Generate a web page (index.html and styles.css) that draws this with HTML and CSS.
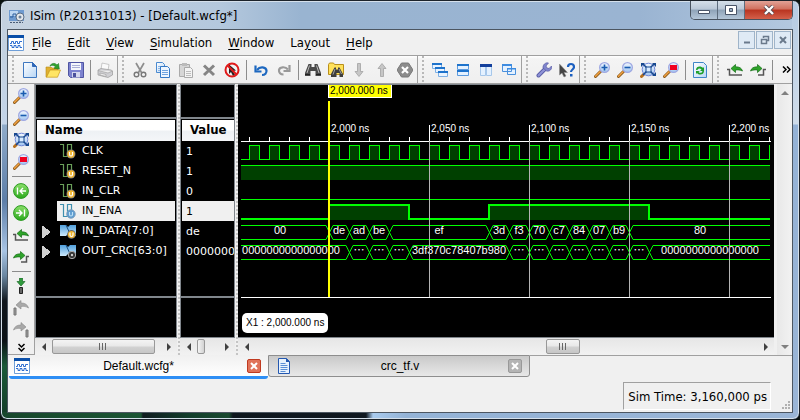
FILE: index.html
```html
<!DOCTYPE html>
<html lang="en">
<head>
  <meta charset="UTF-8">
  <title>ISim (P.20131013) - [Default.wcfg*]</title>
  <link rel="stylesheet" href="styles.css">
</head>
<body>

  <!-- icon set -->
  <svg class="defs" aria-hidden="true">
    <linearGradient id="glass" x1="0" y1="0" x2="0" y2="1">
      <stop offset="0" stop-color="#f4f9ff"/><stop offset="1" stop-color="#9ec4f0"/>
    </linearGradient>
    <linearGradient id="page" x1="0" y1="0" x2="1" y2="1">
      <stop offset="0" stop-color="#fff"/><stop offset="1" stop-color="#b8d6f5"/>
    </linearGradient>
    <linearGradient id="ball" x1="0" y1="0" x2="0" y2="1">
      <stop offset="0" stop-color="#8be06a"/><stop offset="1" stop-color="#2aa81c"/>
    </linearGradient>
    <linearGradient id="busfill" x1="0" y1="0" x2="0" y2="1">
      <stop offset="0" stop-color="#4f9fdc"/><stop offset="1" stop-color="#cfeafc"/>
    </linearGradient>
    <symbol id="app" viewBox="0 0 16 16">
      <path d="M0 2h15v11H0z" fill="#6f9bd0"/><path d="M1 3h8v5H1z" fill="#bcd6f2"/>
      <path d="M1 9h3V6h3v3h2" stroke="#2d5f9e" fill="none"/>
      <circle cx="11" cy="9" r="4" fill="#e4e8ec" stroke="#5c6f86"/><circle cx="11" cy="9" r="1.5" fill="#68809c"/>
      <path d="M1 14.5h13" stroke="#4a5d77" stroke-dasharray="2 1"/>
    </symbol>
    <symbol id="wave" viewBox="0 0 16 16">
      <path d="M.5.5h15v15H.5z" fill="#fff" stroke="#6f9fd8"/><path d="M0 0h16v3H0z" fill="#0b4fa8"/>
      <path d="M2 8.500h1.500v-2h2v2h2v-2h2v2h2v-2H14M2 10.500h2v2h2v-2h2v2h2v-2h2v2h2" fill="none" stroke="#2f6fd0"/>
    </symbol>
    <symbol id="doc" viewBox="0 0 16 16">
      <path d="M2.500.5h8l3 3v12h-11z" fill="#e8f2fd" stroke="#2458b0"/><path d="M10 0v4h4z" fill="#2458b0"/>
      <path d="M4.500 5.500h5m-5 2h7m-7 2h7m-7 2h7m-7 2h5" stroke="#5b8fd6"/>
    </symbol>
    <symbol id="new" viewBox="0 0 16 16">
      <path d="M1.500.5h9l4 4v11h-13z" fill="url(#page)" stroke="#3f78c0"/><path d="M10.500.5v4h4z" fill="#2f68b8" stroke="#2f68b8"/>
    </symbol>
    <symbol id="open" viewBox="0 0 16 16">
      <path d="M1 5h5l1 1h6v2H5l-3 7H1z" fill="#e0b030" stroke="#b58a18" stroke-width=".6"/>
      <path d="M5 8h10.500l-3 7.200H1.500z" fill="#ffe565" stroke="#c99a1c" stroke-width=".7"/>
      <path d="M5 4c1-3 5-3.500 7-1l1.500-1.500.8 5.500-5.300-.8L10.500 5C9 3 7 3 5 4z" fill="#2fa02c" stroke="#14781a" stroke-width=".6"/>
    </symbol>
    <symbol id="save" viewBox="0 0 16 16">
      <path d="M.5.5h15v15h-13l-2-2z" fill="#7d83cf" stroke="#4f55a2"/><path d="M3 1h10v7H3z" fill="#f4f6fb"/>
      <path d="M4 3.500h8M4 5.500h8" stroke="#a9aed6"/><path d="M4 10h8v5.500H4z" fill="#d4d7ee"/><path d="M5 11h3v4H5z" fill="#4b519c"/>
    </symbol>
    <symbol id="print" viewBox="0 0 16 16">
      <path d="M5 1l7 1.500-1 6-7-1z" fill="#fafafa" stroke="#b5b5b5" stroke-width=".7"/>
      <path d="M1 8l3-1.500 10 1.500 1.500 1v4L11 15.500 1 13z" fill="#cfcfd3" stroke="#999" stroke-width=".7"/>
      <path d="M1 8.500l10 2.500 4.500-2M3 11l6 1.500v2L3 13z" fill="#eee" stroke="#999" stroke-width=".6"/>
    </symbol>
    <symbol id="cut" viewBox="0 0 16 16">
      <path d="M4 1l5.500 9.500M12 1L6.500 10.500" stroke="#8e8e8e" stroke-width="1.700"/>
      <circle cx="4.500" cy="12.500" r="2.300" fill="none" stroke="#777" stroke-width="1.400"/><circle cx="11.500" cy="12.500" r="2.300" fill="none" stroke="#777" stroke-width="1.400"/>
    </symbol>
    <symbol id="copy" viewBox="0 0 16 16">
      <path d="M1.500.5h6l2 2v8h-8z" fill="url(#page)" stroke="#4a8ad0"/><path d="M3 4.500h5m-5 2h5m-5 2h5" stroke="#8db6e6"/>
      <path d="M5.500 4.500h7l2 2v9h-9z" fill="#eef6ff" stroke="#3579c6"/><path d="M7 8.500h6m-6 2h6m-6 2h6" stroke="#6fa3df"/>
    </symbol>
    <symbol id="paste" viewBox="0 0 16 16">
      <path d="M1.500 2.500h10v12h-10z" fill="#d6d6d6" stroke="#aaa"/><path d="M4 1h5v3H4z" fill="#bbb"/>
      <path d="M6.500 5.500h6l2 2v8h-8z" fill="#f4f4f4" stroke="#aaa"/><path d="M8 9.500h5m-5 2h5m-5 2h5" stroke="#bdbdbd"/>
    </symbol>
    <symbol id="del" viewBox="0 0 16 16"><path d="M3 3.500l10 9.500M13 3.500L3 13" stroke="#858585" stroke-width="3"/></symbol>
    <symbol id="nosel" viewBox="0 0 16 16">
      <path d="M5 2.500l7 6-3 .5 2 4-2 1-2-4-2 2z" fill="#222"/>
      <circle cx="8" cy="8" r="6.500" fill="none" stroke="#e01a1a" stroke-width="2"/><path d="M3.500 3.500l9 9" stroke="#e01a1a" stroke-width="2"/>
    </symbol>
    <symbol id="undo" viewBox="0 0 16 16">
      <path d="M2.500 3.500v6h6" fill="none" stroke="#1d68c0" stroke-width="2.200"/>
      <path d="M4 8c3-4 9-3 9.500.5.3 2.500-1.500 4.500-4.500 4.500" fill="none" stroke="#1d68c0" stroke-width="2.200"/>
    </symbol>
    <symbol id="redo" viewBox="0 0 16 16">
      <path d="M13.500 3v6h-6" fill="none" stroke="#999" stroke-width="2.200"/>
      <path d="M12 7.500c-3-3.500-8.500-2.500-9 .5-.3 2.500 1.500 4.500 4.500 4.500" fill="none" stroke="#999" stroke-width="2.200"/>
    </symbol>
    <symbol id="find" viewBox="0 0 16 16">
      <path d="M3.500 2h3v3h3V2h3l3.500 9v3h-5.500V9h-5v5H0v-3z" fill="#4a4a4a"/>
      <path d="M4.500 3.500L2 11m9.500-7.500L14 11" stroke="#b9b9b9"/><path d="M0 12.500h5m6 0h5" stroke="#222"/>
    </symbol>
    <symbol id="findf" viewBox="0 0 16 16">
      <path d="M.5 2.500l1-1.500h4l1 1.500h9v10H.5z" fill="#ffe15a" stroke="#b98f1b"/>
      <path d="M6.500 5.500h1.500v2h2v-2h1.500L15 12v3h-3.500v-4h-3v4H3v-3z" fill="#3e3e3e"/><path d="M7 7l-2 5.500m6-5.500l2.500 5" stroke="#bbb" stroke-width=".8"/>
    </symbol>
    <symbol id="down" viewBox="0 0 16 16"><path d="M6.500 1.500h3v8H12l-4 5-4-5h2.500z" fill="#c6c6c6" stroke="#a2a2a2" stroke-width=".8"/></symbol>
    <symbol id="up" viewBox="0 0 16 16"><path d="M6.500 14.500h3v-8H12l-4-5-4 5h2.500z" fill="#c6c6c6" stroke="#a2a2a2" stroke-width=".8"/></symbol>
    <symbol id="stop" viewBox="0 0 16 16">
      <path d="M4.500 1h7L16 8l-4.500 7h-7L0 8z" fill="#8c8c8c" stroke="#787878"/><path d="M5 5l6 6m0-6l-6 6" stroke="#fff" stroke-width="2.200"/>
    </symbol>
    <symbol id="cascade" viewBox="0 0 16 16">
      <path d="M.5 1.500h9v5h-9zM3.500 5.500h9v5h-9zM6.500 9.500h9v5h-9z" fill="#eaf4ff" stroke="#7fb0e4"/>
      <path d="M0 1h10v2H0zM3 5h10v2H3zM6 9h10v2H6z" fill="#1e73cc"/>
    </symbol>
    <symbol id="tileh" viewBox="0 0 16 16">
      <path d="M2.500 2.500h11v5h-11zM2.500 8.500h11v5h-11z" fill="#e4f1ff" stroke="#5b9ade"/><path d="M2 2h12v2H2zM2 8h12v2H2z" fill="#1e73cc"/>
    </symbol>
    <symbol id="tilev" viewBox="0 0 16 16">
      <path d="M2.500 2.500h5v11h-5zM8.500 2.500h5v11h-5z" fill="#e4f1ff" stroke="#a6c7ea"/><path d="M2 2h12v3H2z" fill="#123f9c"/>
    </symbol>
    <symbol id="restore" viewBox="0 0 16 16">
      <path d="M1.500 2.500h9v7h-9zM6.500 6.500h8v6h-8z" fill="#e4f1ff" stroke="#4a90dc"/><path d="M1 2h10v2H1zM6 6h9v1.500H6z" fill="#3d8be0"/>
    </symbol>
    <symbol id="wrench" viewBox="0 0 16 16">
      <path d="M2.500 13.500l6-6" stroke="#5b5fa8" stroke-width="4" stroke-linecap="round"/>
      <path d="M2.500 13.500l6-6" stroke="#8f94d8" stroke-width="2" stroke-linecap="round"/>
      <path d="M12.500 1L10 4l1 2 2 .5L15.500 4c1 3-2 6-5 5L7 6c-.5-3 2.500-6 5.500-5z" fill="#8085cc" stroke="#5054a0" stroke-width=".6"/>
    </symbol>
    <symbol id="help" viewBox="0 0 16 16">
      <path d="M.5 2v11l2.500-2 2 4 2-1-2-3.500h3.500z" fill="#444" stroke="#888" stroke-width=".5"/>
      <path d="M9 5c0-4 6-4 6 0 0 2.500-3 2.500-3 5" fill="none" stroke="#1b5fc0" stroke-width="2.200"/><path d="M11 12h2.500v2.500H11z" fill="#1b5fc0"/>
    </symbol>
    <symbol id="lens" viewBox="0 0 16 16">
      <path d="M1.500 14.500L6.500 9.500" stroke="#8c5a1a" stroke-width="3" stroke-linecap="round"/><path d="M1.500 14.200L6 9.700" stroke="#f0a040" stroke-width="1.500" stroke-linecap="round"/>
      <circle cx="10.500" cy="5.500" r="4.900" fill="url(#glass)" stroke="#9fa8e2" stroke-width="1.200"/>
    </symbol>
    <symbol id="zin" viewBox="0 0 16 16"><use href="#lens"/><path d="M7.500 5.500h6m-3-3v6" stroke="#1a5cb0" stroke-width="1.600"/></symbol>
    <symbol id="zout" viewBox="0 0 16 16"><use href="#lens"/><path d="M7.500 5.500h6" stroke="#1a5cb0" stroke-width="1.600"/></symbol>
    <symbol id="zfit" viewBox="0 0 16 16">
      <path d="M1.500 14.500l3-3" stroke="#b8701c" stroke-width="3" stroke-linecap="round"/>
      <circle cx="8.500" cy="7.500" r="6.300" fill="url(#glass)" stroke="#6f86d8"/>
      <path d="M3 2l11 11M14 2L3 13" stroke="#17488f" stroke-width="1.500"/><path d="M6 5h5v5H6z" fill="#d9ebff" stroke="#17488f"/>
      <path d="M1 1h4L1 5zM16 1h-4l4 4zM16 14h-4l4-4z" fill="#17488f"/>
    </symbol>
    <symbol id="zred" viewBox="0 0 16 16"><use href="#lens"/><path d="M7 3h7v5H7z" fill="#f00020"/></symbol>
    <symbol id="reload" viewBox="0 0 16 16">
      <path d="M1.500.5h10l3 3v12h-13z" fill="url(#page)" stroke="#3f86c8"/>
      <path d="M4 8c0-4 5-4.500 7-2l1-1v4H8l1.500-1.500C8 6 6 6.500 5.500 8zM12 9c0 4-5 4.500-7 2l-1 1V9h4l-1.500 1C8 11.500 10 11 10.500 9z" fill="#1fa02a"/>
    </symbol>
    <symbol id="prev" viewBox="0 0 16 16">
      <path d="M0 7.500h2.500v5.500H15" fill="none" stroke="#555" stroke-width="1.500"/>
      <path d="M4 6.500L8.500 2.500v2.300c4 0 6 1.200 7 4.200C13 7.800 11 7.800 8.500 8V10.500z" fill="#2ea42a" stroke="#146b16" stroke-width=".7"/>
    </symbol>
    <symbol id="next" viewBox="0 0 16 16">
      <path d="M16 7.500h-2.500v5.500H8" fill="none" stroke="#555" stroke-width="1.500"/>
      <path d="M12 6.500L7.500 2.500v2.300c-4 0-6 1.200-7 4.200C3 7.800 5 7.800 7.500 8V10.500z" fill="#2ea42a" stroke="#146b16" stroke-width=".7"/>
    </symbol>
    <symbol id="gostart" viewBox="0 0 16 16">
      <circle cx="8" cy="8" r="7.400" fill="url(#ball)" stroke="#2c9a22"/><path d="M4.500 4.500v7M13 8H7m3-3L7 8l3 3" fill="none" stroke="#fff" stroke-width="1.400"/>
    </symbol>
    <symbol id="goend" viewBox="0 0 16 16">
      <circle cx="8" cy="8" r="7.400" fill="url(#ball)" stroke="#2c9a22"/><path d="M11.500 4.500v7M3 8h6M6 5l3 3-3 3" fill="none" stroke="#fff" stroke-width="1.400"/>
    </symbol>
    <symbol id="marker" viewBox="0 0 16 16">
      <path d="M6.500 0h3v3.500H12L8 8 4 3.500h2.500z" fill="#2f9a3c" stroke="#1b6a26" stroke-width=".7"/><path d="M6.500 9.500h3v6h-3z" fill="#666" stroke="#222"/>
    </symbol>
    <symbol id="mprev" viewBox="0 0 16 16">
      <path d="M3 5l5-4.500V3c4 0 6.500 1.500 7.500 5C13 6.300 11 6.200 8 6.500V9z" fill="#a8a8a8" stroke="#888" stroke-width=".6"/><path d="M1 8h2v7H1z" fill="#999" stroke="#777"/>
    </symbol>
    <symbol id="mnext" viewBox="0 0 16 16">
      <path d="M13 5L8 .5V3C4 3 1.500 4.500.5 8 3 6.300 5 6.200 8 6.500V9z" fill="#a8a8a8" stroke="#888" stroke-width=".6"/><path d="M13 8h2v7h-2z" fill="#999" stroke="#777"/>
    </symbol>
    <symbol id="sig" viewBox="0 0 16 16">
      <path d="M0 1.500h3.500v12h4v-12h4V8" fill="none" stroke="#6aa05a" stroke-width="1.200"/>
      <circle cx="11" cy="11" r="4.500" fill="#777"/><circle cx="11" cy="11" r="3.700" fill="#f0b42c"/><path d="M9.500 9v2.500c0 2 3 2 3 0V9" fill="none" stroke="#fff" stroke-width="1.200"/>
    </symbol>
    <symbol id="sigsel" viewBox="0 0 16 16">
      <path d="M0 1.500h3.500v12h4v-12h4V8" fill="none" stroke="#3f8fae" stroke-width="1.200"/>
      <circle cx="11" cy="11" r="4.200" fill="#5b9bd0" stroke="#7d9dbb"/><path d="M9.500 9v2.500c0 2 3 2 3 0V9" fill="none" stroke="#bfe0f5" stroke-width="1.200"/>
    </symbol>
    <symbol id="bus" viewBox="0 0 16 16">
      <path d="M0 2h6l2 2 2-2h6v11h-6l-2-2-2 2H0z" fill="url(#busfill)"/><path d="M6 2l5 11" stroke="#1c4f80"/>
      <circle cx="11.500" cy="11.500" r="4.400" fill="#666"/><circle cx="11.500" cy="11.500" r="3.600" fill="#f0b42c"/><path d="M10 9.500V12c0 2 3 2 3 0V9.500" fill="none" stroke="#fff" stroke-width="1.200"/>
    </symbol>
    <symbol id="busout" viewBox="0 0 16 16">
      <path d="M0 2h6l2 2 2-2h6v11h-6l-2-2-2 2H0z" fill="url(#busfill)"/><path d="M6 2l5 11" stroke="#1c4f80"/>
      <circle cx="12" cy="12" r="3.700" fill="#333" stroke="#aaa"/><circle cx="12" cy="12" r="1.200" fill="#ccc"/>
    </symbol>
  </svg>

  <div class="window">
    <header class="titlebar">
      <svg class="icon"><use href="#app"/></svg>
      <span class="title">ISim (P.20131013) - [Default.wcfg*]</span>
      <div class="caption">
        <button aria-label="Minimize"><svg width="14" height="10"><path d="M1.500 5.500h11v3h-11z" fill="#fff" stroke="#4a5568"/></svg></button>
        <button aria-label="Maximize"><svg width="12" height="10"><path d="M.5.5h11v9H.5zM4.500 3.500h3v3h-3z" fill="#fff" fill-rule="evenodd" stroke="#4a5568"/></svg></button>
        <button class="close" aria-label="Close"><svg width="12" height="10"><path d="M2 1l8 8m0-8L2 9" stroke="#5b4a50" stroke-width="4"/><path d="M2 1l8 8m0-8L2 9" stroke="#fff" stroke-width="2.400"/></svg></button>
      </div>
    </header>

    <main class="client">
      <nav class="menubar">
        <svg class="icon"><use href="#wave"/></svg>
        <button><u>F</u>ile</button>
        <button><u>E</u>dit</button>
        <button><u>V</u>iew</button>
        <button><u>S</u>imulation</button>
        <button><u>W</u>indow</button>
        <button>La<u>y</u>out</button>
        <button><u>H</u>elp</button>
        <div class="mdi">
          <button aria-label="Minimize document"><svg width="10" height="10"><path d="M2 7.500h6" stroke="#6a7a8c" stroke-width="2"/></svg></button>
          <button aria-label="Restore document"><svg width="10" height="10"><path d="M3.500 3V1.500h5v4H7M1.500 4.500h5v4h-5z" fill="none" stroke="#6a7a8c" stroke-width="1.500"/></svg></button>
          <button aria-label="Close document"><svg width="10" height="10"><path d="M2 2l6 6m0-6L2 8" stroke="#6a7a8c" stroke-width="2"/></svg></button>
        </div>
      </nav>

      <div class="toolbar">
        <div class="group">
          <button aria-label="New"><svg class="icon"><use href="#new"/></svg></button>
          <button aria-label="Open"><svg class="icon"><use href="#open"/></svg></button>
          <button aria-label="Save"><svg class="icon"><use href="#save"/></svg></button>
          <i class="sep"></i>
          <button aria-label="Print"><svg class="icon"><use href="#print"/></svg></button>
        </div>
        <div class="group">
          <button aria-label="Cut"><svg class="icon"><use href="#cut"/></svg></button>
          <button aria-label="Copy"><svg class="icon"><use href="#copy"/></svg></button>
          <button aria-label="Paste"><svg class="icon"><use href="#paste"/></svg></button>
          <button aria-label="Delete"><svg class="icon"><use href="#del"/></svg></button>
          <button aria-label="Deselect"><svg class="icon"><use href="#nosel"/></svg></button>
          <i class="sep"></i>
          <button aria-label="Undo"><svg class="icon"><use href="#undo"/></svg></button>
          <button aria-label="Redo"><svg class="icon"><use href="#redo"/></svg></button>
          <i class="sep"></i>
          <button aria-label="Find"><svg class="icon"><use href="#find"/></svg></button>
          <button aria-label="Find in files"><svg class="icon"><use href="#findf"/></svg></button>
          <button aria-label="Next"><svg class="icon"><use href="#down"/></svg></button>
          <button aria-label="Previous"><svg class="icon"><use href="#up"/></svg></button>
          <button aria-label="Stop"><svg class="icon"><use href="#stop"/></svg></button>
        </div>
        <div class="group">
          <button aria-label="Cascade"><svg class="icon"><use href="#cascade"/></svg></button>
          <button aria-label="Tile horizontally"><svg class="icon"><use href="#tileh"/></svg></button>
          <button aria-label="Tile vertically"><svg class="icon"><use href="#tilev"/></svg></button>
          <button aria-label="Restore"><svg class="icon"><use href="#restore"/></svg></button>
        </div>
        <div class="group">
          <button aria-label="Settings"><svg class="icon"><use href="#wrench"/></svg></button>
          <button aria-label="What's this"><svg class="icon"><use href="#help"/></svg></button>
        </div>
        <div class="group">
          <button aria-label="Zoom in"><svg class="icon"><use href="#zin"/></svg></button>
          <button aria-label="Zoom out"><svg class="icon"><use href="#zout"/></svg></button>
          <button aria-label="Zoom to full view"><svg class="icon"><use href="#zfit"/></svg></button>
          <button aria-label="Zoom to cursor"><svg class="icon"><use href="#zred"/></svg></button>
          <i class="sep"></i>
          <button aria-label="Reload"><svg class="icon"><use href="#reload"/></svg></button>
        </div>
        <div class="group last">
          <button aria-label="Previous transition"><svg class="icon"><use href="#prev"/></svg></button>
          <button aria-label="Next transition"><svg class="icon"><use href="#next"/></svg></button>
          <i class="sep"></i>
          <button aria-label="More"><svg width="9" height="7"><path d="M1 .5l3 3-3 3m4-6l3 3-3 3" fill="none" stroke="#000" stroke-width="1.500"/></svg></button>
        </div>
      </div>

      <div class="workspace">
        <div class="sidebar">
          <button aria-label="Zoom in"><svg class="icon"><use href="#zin"/></svg></button>
          <button aria-label="Zoom out"><svg class="icon"><use href="#zout"/></svg></button>
          <button aria-label="Full view"><svg class="icon"><use href="#zfit"/></svg></button>
          <button aria-label="To cursor"><svg class="icon"><use href="#zred"/></svg></button>
          <i class="hsep"></i>
          <button aria-label="Go to start"><svg class="icon"><use href="#gostart"/></svg></button>
          <button aria-label="Go to end"><svg class="icon"><use href="#goend"/></svg></button>
          <button aria-label="Previous transition"><svg class="icon"><use href="#prev"/></svg></button>
          <button aria-label="Next transition"><svg class="icon"><use href="#next"/></svg></button>
          <i class="hsep"></i>
          <button aria-label="Add marker"><svg class="icon"><use href="#marker"/></svg></button>
          <button aria-label="Previous marker"><svg class="icon"><use href="#mprev"/></svg></button>
          <button aria-label="Next marker"><svg class="icon"><use href="#mnext"/></svg></button>
          <button class="more" aria-label="More"><svg width="7" height="9"><path d="M.5 1l3 3 3-3m-6 4l3 3 3-3" fill="none" stroke="#000" stroke-width="1.500"/></svg></button>
        </div>

        <div class="pane names">
          <div class="view">
            <div class="top"></div>
            <table>
              <thead><tr><th>Name</th></tr></thead>
              <tbody>
                <tr><td><span class="cell"><svg class="icon"><use href="#sig"/></svg><span>CLK</span></span></td></tr>
                <tr><td><span class="cell"><svg class="icon"><use href="#sig"/></svg><span>RESET_N</span></span></td></tr>
                <tr><td><span class="cell"><svg class="icon"><use href="#sig"/></svg><span>IN_CLR</span></span></td></tr>
                <tr class="selected"><td><span class="cell"><svg class="icon"><use href="#sigsel"/></svg><span>IN_ENA</span></span></td></tr>
                <tr class="branch"><td><span class="cell"><svg class="icon"><use href="#bus"/></svg><span>IN_DATA[7:0]</span></span></td></tr>
                <tr class="branch"><td><span class="cell"><svg class="icon"><use href="#busout"/></svg><span>OUT_CRC[63:0]</span></span></td></tr>
              </tbody>
            </table>
            <div class="bottom"></div>
          </div>
          <div class="hscroll">
            <button class="left" aria-label="Scroll left"></button>
            <div class="track"><div class="thumb" style="width: 95%"></div></div>
            <button class="right" aria-label="Scroll right"></button>
          </div>
        </div>

        <div class="splitter"></div>

        <div class="pane values">
          <div class="view">
            <div class="top"></div>
            <table>
              <thead><tr><th>Value</th></tr></thead>
              <tbody>
                <tr><td>1</td></tr>
                <tr><td>1</td></tr>
                <tr><td>0</td></tr>
                <tr class="selected"><td>1</td></tr>
                <tr><td>de</td></tr>
                <tr><td>0000000</td></tr>
              </tbody>
            </table>
            <div class="bottom"></div>
          </div>
          <div class="hscroll">
            <button class="left" aria-label="Scroll left"></button>
            <div class="track"><div class="thumb plain" style="width: 36%"></div></div>
            <button class="right" aria-label="Scroll right"></button>
          </div>
        </div>

        <div class="splitter"></div>

        <div class="pane waves">
          <div class="view">
            <svg id="waveform"></svg>
            <span class="flag">2,000.000 ns</span>
            <span class="readout">X1 : 2,000.000 ns</span>
          </div>
          <div class="hscroll">
            <button class="left" aria-label="Scroll left"></button>
            <div class="track"><div class="thumb" style="width: 34px; margin-left: 58%"></div></div>
            <button class="right" aria-label="Scroll right"></button>
          </div>
        </div>

        <div class="vscroll">
          <button class="up" aria-label="Scroll up"></button>
          <button class="down" aria-label="Scroll down"></button>
        </div>
      </div>

      <div class="tabs">
        <div class="tab active">
          <svg class="icon"><use href="#wave"/></svg>
          <span>Default.wcfg*</span>
          <button aria-label="Close tab"><svg width="8" height="8"><path d="M1 1l6 6m0-6L1 7" stroke="#fff" stroke-width="2"/></svg></button>
        </div>
        <div class="tab">
          <svg class="icon"><use href="#doc"/></svg>
          <span>crc_tf.v</span>
          <button aria-label="Close tab"><svg width="8" height="8"><path d="M1 1l6 6m0-6L1 7" stroke="#fff" stroke-width="2"/></svg></button>
        </div>
        <div class="rest"></div>
      </div>

      <footer class="statusbar">
        <span class="simtime">Sim Time: 3,160,000 ps</span>
        <svg class="grip" width="9" height="9"><path d="M7 1h2m-5 3h2m1 0h2M1 7h2m1 0h2m1 0h2" stroke="#b0b0b0" stroke-width="2"/></svg>
      </footer>
    </main>
  </div>

  <script src="waveform.js"></script>
</body>
</html>
```

FILE: waveform.js
```js
const svg = document.getElementById('waveform');
const NS = 'http://www.w3.org/2000/svg';

const PX_PER_NS = 2;
const CURSOR_X = 91;   // x of t = 2000 ns
const LEFT = 3;
const ROW = 20;
const FIRST_ROW = 60;
const width = svg.parentElement.clientWidth;
const RIGHT = width - 4;

const dataBus = [
  [1951, '00'], [2000, 'de'], [2010, 'ad'], [2020, 'be'], [2030, 'ef'],
  [2080, '3d'], [2090, 'f3'], [2100, '70'], [2110, 'c7'], [2120, '84'],
  [2130, '07'], [2140, 'b9'], [2150, '80']
];
const crcBus = [
  [1952, '0000000000000000'], [2010, '…'], [2020, '…'], [2030, '…'],
  [2040, '3df370c78407b980'], [2090, '…'], [2100, '…'], [2110, '…'],
  [2120, '…'], [2130, '…'], [2140, '…'], [2150, '…'],
  [2160, '0000000000000000']
];

function xOf(t) {
  return CURSOR_X + (t - 2000) * PX_PER_NS;
}

function add(name, attrs, text) {
  const el = document.createElementNS(NS, name);
  for (const key in attrs) el.setAttribute(key, attrs[key]);
  if (text) el.textContent = text;
  svg.appendChild(el);
}

function hline(x1, x2, y, cls) {
  add('rect', { x: x1, y: y, width: x2 - x1, height: 1, class: cls });
}

function vline(x, y1, y2, cls) {
  add('rect', { x: x, y: y1, width: 1, height: y2 - y1, class: cls });
}

function drawClock(row) {
  const top = FIRST_ROW + row * ROW;
  const bottom = top + 14;
  hline(LEFT, xOf(1960), bottom, 'green');
  for (let t = 1960; xOf(t) < RIGHT; t += 10) {
    const x = xOf(t);
    const end = Math.min(x + 10, RIGHT);
    add('rect', { x: x, y: top, width: end - x, height: 15, class: 'high' });
    vline(x, top, bottom + 1, 'green');
    hline(x, end, top, 'green');
    if (end < RIGHT) {
      vline(end, top, bottom + 1, 'green');
      hline(end, Math.min(x + 20, RIGHT), bottom, 'green');
    }
  }
}

function drawEnable(row) {
  const top = FIRST_ROW + row * ROW;
  const bottom = top + 14;
  let d = `M${LEFT} ${bottom}`;
  for (const [from, to] of [[2000, 2040], [2080, 2160]]) {
    add('rect', { x: xOf(from), y: top, width: xOf(to) - xOf(from), height: 15, class: 'high' });
    d += `H${xOf(from)}V${top}H${xOf(to)}V${bottom}`;
  }
  add('path', { d: d + `H${RIGHT}`, class: 'trace bold' });
}

function drawBus(row, segments) {
  const top = FIRST_ROW + row * ROW;
  const bottom = top + 14;
  segments.forEach(([t, label], i) => {
    const last = i === segments.length - 1;
    const x0 = xOf(t);
    const x1 = last ? RIGHT + 1 : xOf(segments[i + 1][0]);
    const a = Math.max(x0 + 4, LEFT);
    const b = last ? RIGHT : x1 - 3;
    hline(a, b, top, 'green');
    hline(a, b, bottom, 'green');
    if (!last) {
      add('path', {
        d: `M${b} ${top + 0.5}L${x1 + 4} ${bottom + 0.5}M${b} ${bottom + 0.5}L${x1 + 4} ${top + 0.5}`,
        class: 'trace'
      });
    }
    const cls = label === '…' ? 'data dots' : 'data';
    add('text', { x: (x0 + x1) / 2, y: top + 9, class: cls }, label);
  });
}

svg.setAttribute('width', width);

drawClock(0);
add('rect', { x: LEFT, y: 80, width: RIGHT - LEFT, height: 15, class: 'high' });
hline(LEFT, RIGHT, 80, 'green');
hline(LEFT, RIGHT, 114, 'green');
drawEnable(3);
drawBus(4, dataBus);
drawBus(5, crcBus);

// time axis
hline(LEFT, RIGHT + 1, 56, 'axis');
hline(LEFT, RIGHT + 1, 212, 'axis');
for (let t = 1960; xOf(t) < RIGHT; t += 10) {
  const x = xOf(t);
  if (t % 50) {
    vline(x, 52, 56, 'axis');
    continue;
  }
  vline(x, 56, 212, 'grid');
  vline(x, 40, 56, 'axis');
  add('text', { x: x + 2, y: 47, class: 'time' }, t.toLocaleString('en-US') + ' ns');
}

add('rect', { x: CURSOR_X - 1, y: 16, width: 2, height: 196, class: 'cursor' });
```

FILE: styles.css
```css
body {
  margin: 0;
  background: #0a120e;
  font-family: "DejaVu Sans Condensed", "DejaVu Sans", Verdana, sans-serif;
  font-size: 13px;
  color: #000;
}

* {
  box-sizing: border-box;
}

button {
  padding: 0;
  border: 0;
  background: none;
  font: inherit;
  color: inherit;
}

.defs {
  position: absolute;
  width: 0;
  height: 0;
}

.icon {
  width: 16px;
  height: 16px;
  flex: none;
}

/* window frame */
.window {
  display: flex;
  flex-direction: column;
  min-height: 100vh;
  padding: 0 6px 6px;
  border: 1px solid #1c232b;
  border-radius: 7px;
  background:
    linear-gradient(90deg, #17472c 0, #1b5534 140px, #101c20 142px, #123f2c 190px, #1a4a30 228px, #0e171e 232px, #101820 365px, #a9cbee 372px, #94b3d6 405px, #9ab5d6 100%) bottom / 100% 7px no-repeat,
    linear-gradient(180deg, #c3d0dd 0, #c3d4e8 123px, #8fabc9 124px, #5d7ea8 200px, #a8c4e4 250px, #6a86a0 275px, #10161c 300px, #0b1115 340px, #1b5a38 365px, #123a26 100%) left / 7px 100% no-repeat,
    linear-gradient(180deg, #b5cbe3 0, #cfdcea 123px, #94b2d6 124px, #9ab5d6 100%) right / 7px 100% no-repeat,
    linear-gradient(90deg, #c6d3e0 0, #b4c8dd 220px, #99b4d1 300px, #9ab4d2 80%, #b4c9e0 100%);
  box-shadow: inset 0 0 0 1px #d5e0eb;
}

.titlebar {
  display: flex;
  align-items: flex-start;
  height: 28px;
  padding-left: 2px;
}

.titlebar .icon {
  margin: 7px 5px 0 0;
}

.title {
  flex: 1;
  line-height: 30px;
}

.caption {
  display: flex;
  border: 1px solid #48525e;
  border-top: 0;
  border-radius: 0 0 5px 5px;
  overflow: hidden;
}

.caption button {
  display: flex;
  align-items: center;
  justify-content: center;
  width: 27px;
  height: 18px;
  border-right: 1px solid #5d6c7d;
  background: linear-gradient(#d5dfe9 0, #b9c7d6 45%, #8fa3b8 50%, #b4c6d8 100%);
}

.caption .close {
  width: 47px;
  border-right: 0;
  background: linear-gradient(#e2a296 0, #d0705e 45%, #b93420 50%, #d4604a 100%);
}

.client {
  display: flex;
  flex: 1;
  flex-direction: column;
  border: 1px solid #4c5661;
  background: #f0f0f0;
}

/* menu */
.menubar {
  display: flex;
  align-items: center;
  gap: 16px;
  height: 25px;
}

.menubar .icon {
  margin-right: -8px;
}

.menubar u {
  text-underline-offset: 2px;
}

.mdi {
  display: flex;
  gap: 1px;
  align-self: flex-start;
  margin: 1px 1px 0 auto;
}

.mdi button {
  display: flex;
  align-items: center;
  justify-content: center;
  width: 17px;
  height: 18px;
  border: 1px solid #9fb4c9;
  background: #dfeaf5;
}

/* toolbar */
.toolbar {
  display: flex;
  height: 29px;
  border-top: 1px solid #a0a0a0;
  border-bottom: 1px solid #a0a0a0;
  background: linear-gradient(#fff, #f4f4f4 3px, #efefef);
}

.group {
  display: flex;
  align-items: center;
  padding: 0 1px 0 10px;
  border-right: 1px solid #a0a0a0;
  background: radial-gradient(circle, #b8b8b8 1px, transparent 1px) 3px 3px / 4px 4px repeat-y;
}

.group.last {
  flex: 1;
  padding-right: 0;
  border-right: 0;
}

.toolbar button {
  display: flex;
  align-items: center;
  justify-content: center;
  width: 23px;
  height: 24px;
}

.sep {
  width: 6px;
  height: 20px;
  background: linear-gradient(#8c8c8c, #8c8c8c) center / 1px 100% no-repeat;
}

/* workspace */
.workspace {
  display: grid;
  grid-template-columns: 27px 142px 3px 55px 3px 1fr 18px;
}

.sidebar {
  display: flex;
  flex-direction: column;
  align-items: center;
  padding-top: 1px;
  border-right: 1px solid #a0a0a0;
  border-bottom: 1px solid #a0a0a0;
}

.sidebar button {
  display: flex;
  align-items: center;
  justify-content: center;
  width: 24px;
  height: 22px;
}

.sidebar .more {
  height: 13px;
}

.hsep {
  width: 19px;
  height: 7px;
  background: linear-gradient(#8c8c8c, #8c8c8c) center / 100% 1px no-repeat;
}

.pane {
  display: flex;
  flex-direction: column;
  min-width: 0;
}

.view {
  position: relative;
  display: flex;
  flex: 1;
  flex-direction: column;
  overflow: hidden;
  border: 1px solid #80868c;
  background: #000;
  color: #fff;
}

.top {
  height: 34px;
  border-bottom: 2px solid #80868c;
}

.bottom {
  height: 41px;
  margin-top: auto;
  border-top: 2px solid #80868c;
}

.view table {
  margin: 1px 1px 0;
  border-collapse: collapse;
  font-family: "DejaVu Sans", Verdana, sans-serif;
  font-size: 11px;
}

.view th {
  height: 21px;
  padding: 0 0 2px 8px;
  background: linear-gradient(#fff 0, #fff 45%, #eef1f4 55%, #f4f6f8 100%);
  color: #000;
  font-family: "DejaVu Sans Condensed", "DejaVu Sans", sans-serif;
  font-size: 13px;
  font-weight: bold;
  text-align: left;
}

.view td {
  height: 20px;
  padding: 0;
  white-space: nowrap;
}

.names .cell {
  display: flex;
  align-items: center;
  gap: 6px;
  height: 20px;
  margin-left: 20px;
  padding-left: 3px;
}

.cell span {
  padding-bottom: 2px;
}

.names .branch td {
  background: conic-gradient(from 233deg at 9px 50%, #d0d0d0 74deg, transparent 0) 5px 5px / 9px 12px no-repeat;
}

.names .selected .cell,
.values .selected td {
  background: #f0f0f0;
  color: #000;
}

.values td {
  padding-left: 4px;
}

.splitter {
  background: radial-gradient(circle, #c4c4c4 1px, transparent 1px) 0 88px / 4px 4px repeat-y, #f0f0f0;
}

/* waveform */
.waves .view {
  border-width: 1px 0;
}

#waveform {
  display: block;
  height: 252px;
  font-family: "Liberation Sans", Arial, sans-serif;
}

#waveform rect {
  shape-rendering: crispEdges;
}

#waveform .high { fill: #004000; }
#waveform .green { fill: #00ff00; }
#waveform .axis { fill: #fff; }
#waveform .grid { fill: #b4b4b4; }
#waveform .cursor { fill: #ff0; }
#waveform .trace { fill: none; stroke: #00ff00; }
#waveform .bold { stroke-width: 2; }

#waveform text {
  fill: #fff;
  font-size: 11px;
}

#waveform .data {
  text-anchor: middle;
}

#waveform .dots {
  font-family: "Noto Sans CJK JP", sans-serif;
}

#waveform .time {
  font-size: 10px;
}

.flag,
.readout {
  position: absolute;
  color: #000;
  font-family: "Liberation Sans", Arial, sans-serif;
  font-size: 10px;
}

.flag {
  top: 0;
  left: 90px;
  padding: 0 3px 0 1px;
  border: 1px solid #fff;
  border-top: 0;
  background: #ff0;
  line-height: 12px;
}

.readout {
  bottom: 4px;
  left: 4px;
  padding: 0 4px;
  border-radius: 5px;
  background: #fff;
  line-height: 20px;
}

/* scroll bars */
.hscroll {
  display: flex;
  height: 17px;
  background: linear-gradient(#e6e6e6, #f2f2f2);
}

.hscroll button {
  width: 17px;
}

.hscroll button::before,
.vscroll button::before {
  content: "";
  display: block;
  width: 0;
  margin: auto;
  border: 4px solid transparent;
}

.hscroll .left::before { border-left-width: 0; border-right-color: #404040; }
.hscroll .right::before { border-right-width: 0; border-left-color: #404040; }

.track {
  flex: 1;
  padding: 1px 0;
}

.thumb {
  height: 15px;
  border: 1px solid #989898;
  border-radius: 2px;
  background:
    repeating-linear-gradient(90deg, #666 0 1px, transparent 1px 3px) center / 9px 7px no-repeat,
    linear-gradient(#f4f4f4 0, #e8e8e8 48%, #d2d2d2 52%, #c6c6c6 100%);
}

.thumb.plain {
  background: linear-gradient(90deg, #f4f4f4, #d2d2d2);
}

.vscroll {
  display: flex;
  flex-direction: column;
  justify-content: space-between;
  margin-left: 3px;
  background: linear-gradient(90deg, #e8e8e8, #f2f2f2);
}

.vscroll button {
  height: 17px;
}

.vscroll .up::before { border-top-width: 0; border-bottom-color: #808080; }
.vscroll .down::before { border-bottom-width: 0; border-top-color: #808080; }

/* document tabs */
.tabs {
  display: flex;
  height: 24px;
  font-family: "Liberation Sans", Arial, sans-serif;
  font-size: 12px;
}

.tab {
  display: flex;
  align-items: center;
  width: 262px;
  height: 22px;
  padding: 0 7px;
  border: 1px solid #8e8e8e;
  border-radius: 0 0 3px 3px;
  background: linear-gradient(#c9c9c9, #e8e8e8);
}

.tab.active {
  width: 259px;
  height: 24px;
  margin-left: 1px;
  padding: 0 7px 0 5px;
  border: 0;
  border-bottom: 3px solid #2f8ff5;
  background: linear-gradient(#f0f0f0, #fff);
}

.tab span {
  flex: 1;
  text-align: center;
}

.tab button {
  display: flex;
  align-items: center;
  justify-content: center;
  width: 14px;
  height: 14px;
  border: 1px solid #999;
  border-radius: 2px;
  background: #b4b4b4;
}

.tab.active button {
  border-color: #c03a20;
  background: #e0735a;
}

.rest {
  flex: 1;
  border-top: 1px solid #a0a0a0;
}

/* status bar */
.statusbar {
  display: flex;
  flex: 1;
  align-items: flex-end;
  justify-content: flex-end;
  padding: 3px 2px 2px 0;
}

.simtime {
  align-self: stretch;
  display: flex;
  align-items: center;
  margin-right: 10px;
  padding: 0 3px 0 4px;
  border: 1px solid #a0a0a0;
  border-right-color: #fff;
  border-bottom-color: #fff;
}
```
